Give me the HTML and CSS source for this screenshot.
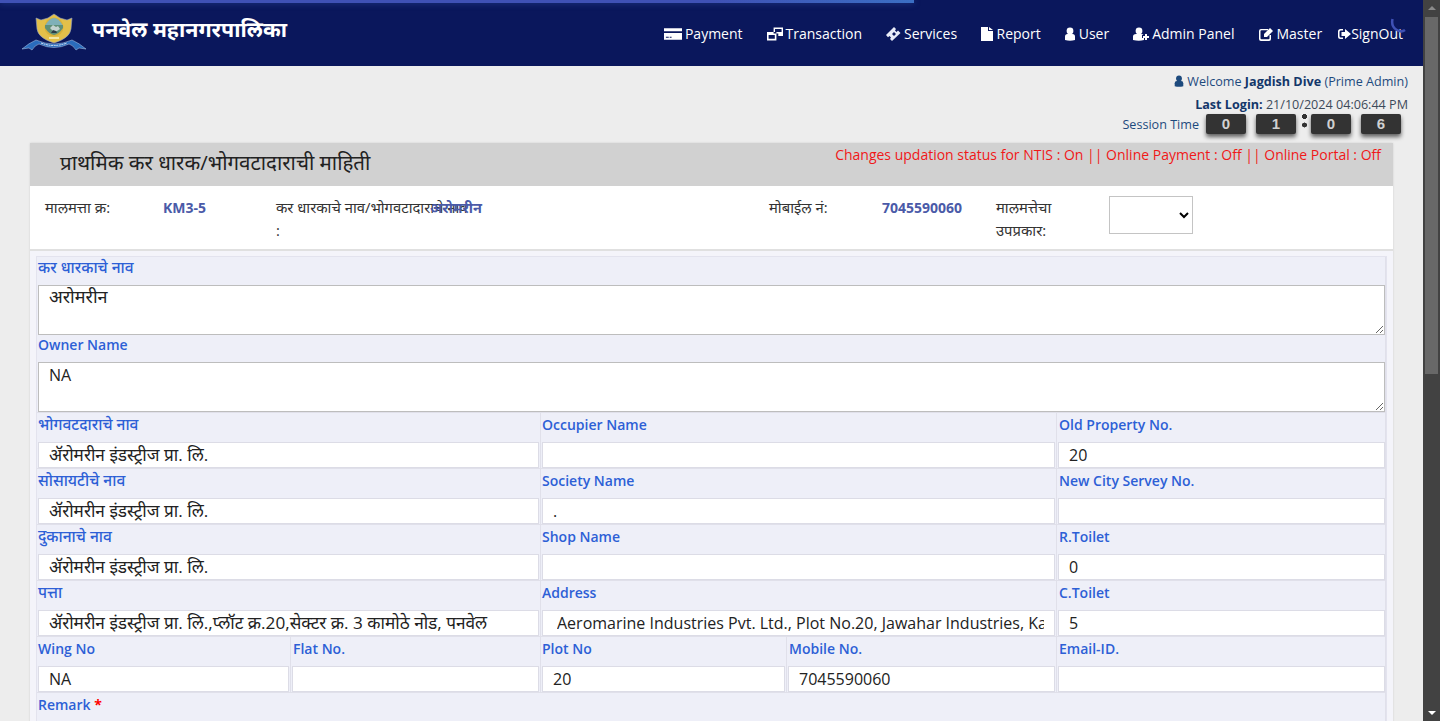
FILE: index.html
```html
<!DOCTYPE html>
<html lang="mr">
<head>
<meta charset="utf-8">
<title>पनवेल महानगरपालिका</title>
<link rel="stylesheet" href="styles.css">
</head>
<body>
<div class="page">
  <div class="progress"></div>
  <header class="topbar">
    <div class="brand">
      <svg class="logo" width="66" height="40" viewBox="0 0 66 40">
        <path d="M15 6l5 2 7-2 6-4 6 4 7 2 5-2-1 11q-1 9-17 14Q17 26 16 17z" fill="#e3c04a" stroke="#8fa0c8" stroke-width=".6"/>
        <circle cx="33" cy="15" r="9.500" fill="#d9b23a"/>
        <path d="M24.500 13q4-7 8.500-7t8.500 7z" fill="#7fb0b8"/>
        <path d="M24 13h18v3q-4 6-9 7-5-1-9-7z" fill="#5f8f78"/>
        <path d="M29 16l3-3 3 2 2-1 2 3-3 2h-4z" fill="#c4d2d0"/>
        <path d="M30 21l2-3 3 1 1 2z" fill="#2d3c46"/>
        <path d="M28 25h10v2H28z" fill="#f3e7a8"/>
        <path d="M1 37q7-6 14-9 18 8 36 0 7 3 14 9l-7-1-3 2q-3-5-7-6-15 7-30 0-4 1-7 6l-3-2z" fill="#2a6cbc" stroke="#b9cfeb" stroke-width=".5"/>
        <path d="M20 31q13 5 26 0" fill="none" stroke="#e8eef8" stroke-width=".9" stroke-dasharray="2 .6"/>
      </svg>
      <span class="brand-name">पनवेल महानगरपालिका</span>
    </div>
    <nav class="nav">
      <a class="nav-item"><svg class="i" width="18" height="14" viewBox="0 0 19 14"><path d="M0 1h19v3H0zM0 6h19v7H0z" fill="#fff"/><path d="M2 10h3v1H2zM6 10h2v1H6z" fill="#0a175c"/></svg>Payment</a>
      <a class="nav-item"><svg class="i" width="16" height="14" viewBox="0 0 17 14"><path d="M7 0h10v9h-5V6.500H7zM8.500 1.800v3h7V1.800zM0 5h10v9H0zM1.700 8v4h6.600V8z" fill="#fff" fill-rule="evenodd"/></svg>Transaction</a>
      <a class="nav-item"><svg class="i" width="15" height="14" viewBox="0 0 15 14"><path d="M0 8l8-8 2 2-1 1.500 1.500 1.500L12 3.500 14.500 6 6 14l-2-2 1-1.500L3.500 9 2 10.200z" fill="#e8ecf8"/><path d="M6 7l2-2 2 2-2 2z" fill="#0a175c"/></svg>Services</a>
      <a class="nav-item nav-report"><svg class="i4" width="12" height="14" viewBox="0 0 12 14"><path d="M0 0h7v4h5v10H0zM8 0l4 3H8z" fill="#fff"/></svg>Report</a>
      <a class="nav-item"><svg class="i4" width="10" height="14" viewBox="0 0 10 14"><circle cx="5" cy="4" r="3.400" fill="#fff"/><path d="M0 13V9.500Q0 7 2.500 7h5Q10 7 10 9.500V13q-5 1.600-10 0z" fill="#fff"/></svg>User</a>
      <a class="nav-item"><svg class="i" width="16" height="14" viewBox="0 0 16 14"><circle cx="6" cy="4" r="3.400" fill="#fff"/><path d="M0 13V9.500Q0 7 3 7h5q2 0 2.500 1H9v3h2v2q-5 1.300-11 0z" fill="#fff"/><path d="M12 7h2v2h2v2h-2v2h-2v-2h-2V9h2z" fill="#fff"/></svg>Admin Panel</a>
      <a class="nav-item"><svg class="i" width="15" height="14" viewBox="0 0 15 14"><path d="M2 2h7v1.300H2.500q-1 0-1 1v7q0 1 1 1h7q1 0 1-1V8H12v4q0 2-2 2H2q-2 0-2-2V4q0-2 2-2z" fill="#fff"/><path d="M5 7l6-6 3 3-6 6H5z" fill="#fff"/></svg>Master</a>
      <a class="nav-item nav-last"><svg class="i-tight" width="13" height="12" viewBox="0 0 13 12"><path d="M5 1H2.500Q0 1 0 3.500v5Q0 11 2.500 11H5V9.500H2.700Q1.500 9.500 1.500 8V4q0-1.500 1.200-1.500H5z" fill="#fff"/><path d="M7 1l6 5-6 5V8H3.500V4H7z" fill="#fff"/></svg>SignOut</a>
    </nav>
  </header>
  <svg class="spinner" width="17" height="15" viewBox="0 0 17 15"><path d="M2.500 1Q1 8 6 11.500t9 .5" fill="none" stroke="#3f51b5" stroke-width="2.500"/></svg>

  <section class="session">
    <div class="welcome"><svg class="u" width="10" height="12" viewBox="0 0 10 14"><circle cx="5" cy="4" r="3.400" fill="#1d4a7d"/><path d="M0 13V9.500Q0 7 2.500 7h5Q10 7 10 9.500V13q-5 1.600-10 0z" fill="#1d4a7d"/></svg>Welcome <b>Jagdish Dive</b> (Prime Admin)</div>
    <div class="lastlogin"><b>Last Login:</b> 21/10/2024 04:06:44 PM</div>
    <div class="timer">
      <span class="timer-label">Session Time</span>
      <span class="digit">0</span>
      <span class="digit d2">1</span>
      <span class="colon"></span>
      <span class="digit">0</span>
      <span class="digit d2">6</span>
    </div>
  </section>

  <main class="card">
    <div class="card-head">
      <h1>प्राथमिक कर धारक/भोगवटादाराची माहिती</h1>
      <p class="status">Changes updation status for NTIS : On || Online Payment : Off || Online Portal : Off</p>
    </div>
    <div class="info">
      <span class="lbl">मालमत्ता क्र:</span>
      <span class="val">KM3-5</span>
      <span class="lbl lbl-over">कर धारकाचे नाव/भोगवटादाराचे नाव<br>:</span>
      <span class="val val-dv">अरोमरीन</span>
      <span class="lbl">मोबाईल नं:</span>
      <span class="val">7045590060</span>
      <span class="lbl">मालमत्तेचा उपप्रकार:</span>
      <select class="sel"><option></option></select>
    </div>
    <div class="form-wrap">
      <div class="form">
        <div class="cell full first"><label class="dv">कर धारकाचे नाव</label><textarea class="dv-area">अरोमरीन</textarea></div>
        <div class="cell full owner"><label>Owner Name</label><textarea>NA</textarea></div>

        <div class="cell s2"><label class="dv">भोगवटदाराचे नाव</label><input class="dv-in" value="ॲरोमरीन इंडस्ट्रीज प्रा. लि."></div>
        <div class="cell s2"><label>Occupier Name</label><input value=""></div>
        <div class="cell end"><label>Old Property No.</label><input value="20"></div>

        <div class="cell s2"><label class="dv">सोसायटीचे नाव</label><input class="dv-in" value="ॲरोमरीन इंडस्ट्रीज प्रा. लि."></div>
        <div class="cell s2"><label>Society Name</label><input value="."></div>
        <div class="cell end"><label>New City Servey No.</label><input value=""></div>

        <div class="cell s2"><label class="dv">दुकानाचे नाव</label><input class="dv-in" value="ॲरोमरीन इंडस्ट्रीज प्रा. लि."></div>
        <div class="cell s2"><label>Shop Name</label><input value=""></div>
        <div class="cell end"><label>R.Toilet</label><input value="0"></div>

        <div class="cell s2"><label class="dv">पत्ता</label><input class="dv-in" value="ॲरोमरीन इंडस्ट्रीज प्रा. लि.,प्लॉट क्र.20,सेक्टर क्र. 3 कामोठे नोड, पनवेल"></div>
        <div class="cell s2"><label>Address</label><input class="wide-pad" value="Aeromarine Industries Pvt. Ltd., Plot No.20, Jawahar Industries, Kamothe, Panvel"></div>
        <div class="cell end"><label>C.Toilet</label><input value="5"></div>

        <div class="cell"><label>Wing No</label><input value="NA"></div>
        <div class="cell ind"><label>Flat No.</label><input value=""></div>
        <div class="cell"><label>Plot No</label><input value="20"></div>
        <div class="cell ind"><label>Mobile No.</label><input value="7045590060"></div>
        <div class="cell end"><label>Email-ID.</label><input value=""></div>

        <div class="cell full remark"><label>Remark <span class="req">*</span></label></div>
      </div>
    </div>
  </main>
</div>
<aside class="scrollbar">
  <span class="arrow up"></span>
  <span class="thumb"></span>
  <span class="arrow down"></span>
</aside>
</body>
</html>
```

FILE: styles.css
```css
* { box-sizing: border-box; }
html, body { margin: 0; height: 721px; overflow: hidden; }
body {
  display: flex;
  background: #ededed;
  font-family: "Open Sans", "Noto Sans", "Noto Sans Devanagari", sans-serif;
  font-size: 13px;
  color: #333;
}
.page { position: relative; flex: 1; min-width: 0; height: 721px; overflow: hidden; }

.progress {
  position: absolute; left: 0; top: 0; width: 914px; height: 3px;
  background: linear-gradient(90deg, #3f51b5 0, #3f51b5 78%, #3b6fc4 100%);
  box-shadow: 0 0 6px rgba(63, 110, 200, .5);
}
.spinner { position: absolute; left: 1390px; top: 18px; }

.topbar {
  height: 66px; background: #0a175c; display: flex; align-items: flex-start;
  justify-content: space-between; padding: 0 20px 0 21px; color: #fff;
}
.brand { display: flex; align-items: flex-start; padding-top: 12px; }
.logo { display: block; }
.brand-name { margin-left: 5px; margin-top: 2px; font-size: 21.400px; line-height: 30px; font-weight: 700; white-space: nowrap; }
.nav { display: flex; gap: 24px; padding-top: 24px; }
.nav-item { display: flex; align-items: center; font-size: 14px; line-height: 19px; color: #fff; white-space: nowrap; }
.nav-report { margin-left: -.6px; }
.nav-last { margin-left: -8px; }
.i { margin-right: 3px; flex: none; }
.i4 { margin-right: 4px; flex: none; }
.i-tight { margin-right: 0; flex: none; }

.session { height: 77px; padding: 7px 15px 0 0; text-align: right; font-size: 12.600px; color: #1d4a7d; }
.welcome { line-height: 18px; height: 18px; }
.u { margin-right: 3px; vertical-align: -1px; }
.welcome b { color: #13376a; font-weight: 700; }
.lastlogin { margin-top: 5px; line-height: 18px; height: 18px; color: #3d4a5a; }
.lastlogin b { color: #13376a; }
.timer { display: flex; justify-content: flex-end; align-items: center; padding-right: 7px; height: 20px; }
.timer-label { margin-right: 7px; }
.digit {
  width: 40px; height: 20px; background: #333; border-radius: 2px; color: #d0d0d0;
  font-family: "Liberation Sans", sans-serif;
  font-weight: 700; font-size: 15px; line-height: 20px; text-align: center;
  box-shadow: 0 3px 4px rgba(0, 0, 0, .6);
}
.d2 { margin-left: 10px; }
.colon {
  width: 15px; height: 14px; align-self: flex-start;
  background: radial-gradient(circle at 8.500px 2.500px, #333 2.300px, transparent 2.700px),
              radial-gradient(circle at 8.500px 11px, #333 2.300px, transparent 2.700px);
}

.card { margin: 0 30px; background: #fff; box-shadow: 0 0 2px rgba(0, 0, 0, .12); height: 600px; }
.card-head { height: 43px; background: #d1d1d1; display: flex; justify-content: space-between; padding: 0 12px 0 30px; }
.card-head h1 { margin: 5px 0 0; font-size: 20.500px; line-height: 28px; font-weight: 400; color: #222; white-space: nowrap; }
.status { margin: 2px 0 0; font-size: 14px; line-height: 19px; color: #f01818; white-space: nowrap; }

.info {
  height: 65px; display: grid; padding: 10px 0 0 15px; border-bottom: 2px solid #e0e0e0;
  grid-template-columns: 118px 113px 156px 337px 113px 114px 113px 84px;
  align-content: start; align-items: start; font-size: 14.800px; line-height: 23px;
}
.lbl { color: #333; padding-right: 10px; }
.lbl-over { white-space: nowrap; padding-right: 0; }
.val { color: #4a5aa8; font-weight: 700; font-size: 14px; }
.val-dv { margin-left: -2px; font-size: 14.500px; }
.sel { width: 84px; height: 38px; background: #fff; border: 1px solid #c4c4c4; }

.form-wrap { padding: 5px 6px 0 7px; background: #f4f4fa; height: 492px; }
.form {
  display: grid; background: #eeeff8; border: 1px solid #e3e3ee; border-bottom: 0; width: 1351px;
  grid-template-columns: 254px 250px 246px 270px 329px;
  grid-template-rows: 79px 77px repeat(6, 56px);
  margin-left: -1px;
}
.cell { display: flex; flex-direction: column; border-right: 1px solid #e0e0ea; border-bottom: 1px solid #e0e0ea; padding: 0 1px; }
.full, .end { padding-right: 0; }
.full { grid-column: span 5; }
.first { border-bottom: 0; }
.s2 { grid-column: span 2; }
.remark { border-bottom: 0; }
.cell label { font-size: 14px; line-height: 18px; height: 29px; padding-top: 3px; color: #2d5fd6; font-weight: 600; white-space: nowrap; }
.end label, .ind label { padding-left: 1px; }
.cell .dv { font-size: 15.500px; font-weight: 500; padding-top: 2px; }
.first .dv { height: 28px; padding-top: 1px; }
.owner label { height: 26px; padding-top: 0; }
.cell input, .cell textarea {
  display: block; width: 100%; border: 1px solid #dcdce6; background: #fff; padding: 0 10px;
  font-family: "Open Sans", "Noto Sans", "Noto Sans Devanagari", sans-serif; font-size: 16px; color: #222;
  outline: 0;
}
.cell input { height: 26px; line-height: 24px; flex: none; }
.cell .dv-in { font-size: 17.200px; padding-bottom: 2px; }
.cell .wide-pad { padding-left: 14px; }
.cell textarea { height: 50px; flex: none; border-color: #bdbdbd; line-height: 24px; resize: vertical; }
.cell .dv-area { font-size: 18px; line-height: 20px; }
.req { color: #f00; font-weight: 700; }

.scrollbar { width: 17px; height: 721px; flex: none; background: #424242; display: flex; flex-direction: column; align-items: center; }
.arrow { width: 0; height: 0; border-left: 4px solid transparent; border-right: 4px solid transparent; flex: none; }
.up { border-bottom: 4px solid #8a8a8a; margin: 6px 0 7px; }
.thumb { width: 13px; height: 357px; background: #686868; flex: none; }
.down { border-top: 4px solid #fff; margin-top: auto; margin-bottom: 6px; }
```
